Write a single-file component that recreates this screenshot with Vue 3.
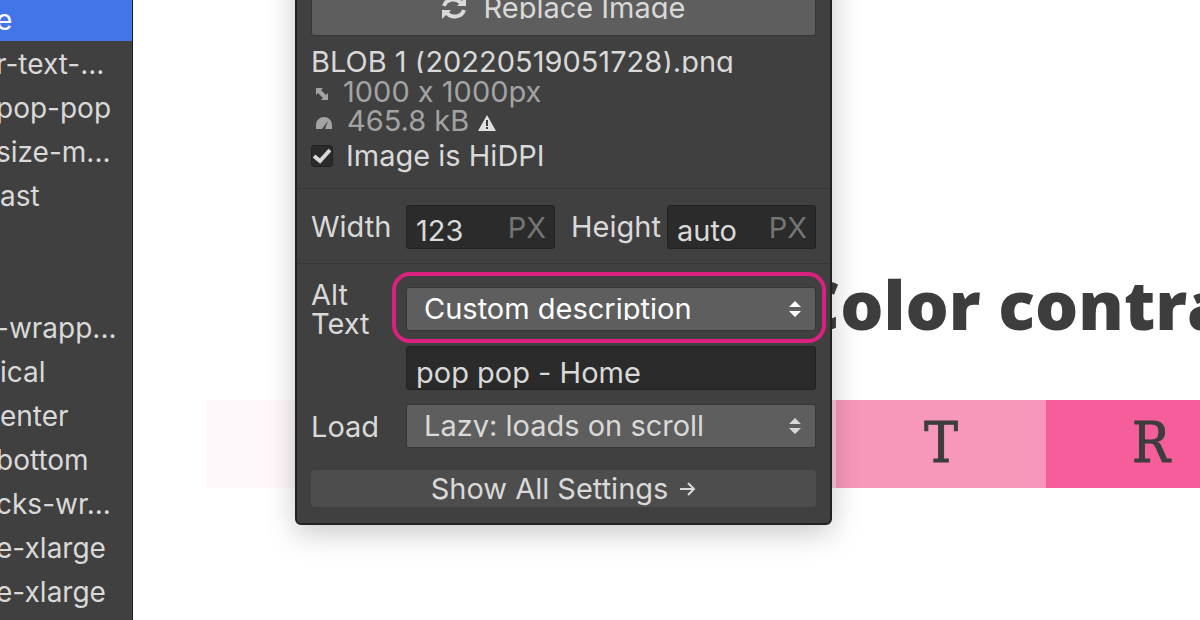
<script setup>
import { ref } from 'vue'

const layers = [
  { text: 'e', shift: 'active' },
  { text: 'r-text-...', shift: 'cut' },
  { text: 'pop-pop', shift: 'cut' },
  { text: 'size-m...', shift: 'cut' },
  { text: 'ast' },
  { text: '' },
  { text: '' },
  { text: '-wrapp...', shift: 'cut' },
  { text: 'ical' },
  { text: 'enter' },
  { text: 'bottom', shift: 'cut' },
  { text: 'cks-wr...', shift: 'cut' },
  { text: 'e-xlarge', shift: 'cut' },
  { text: 'e-xlarge', shift: 'cut' },
]

const swatches = [
  { letter: '', tone: 'tone-1' },
  { letter: '', tone: 'tone-2' },
  { letter: '', tone: 'tone-3' },
  { letter: 'T', tone: 'tone-4' },
  { letter: 'R', tone: 'tone-5' },
]

const hidpi = ref(true)
const width = ref('123')
const height = ref('auto')
const altMode = ref('custom')
const altText = ref('pop pop - Home')
const load = ref('lazy')
</script>

<template>
  <div class="designer">
    <nav class="sidebar" aria-label="Layers">
      <ul class="layers">
        <li v-for="(l, i) in layers" :key="i" :class="l.shift">{{ l.text }}</li>
      </ul>
    </nav>

    <main class="canvas">
      <h1 class="title">Color contrast</h1>
      <div class="swatches">
        <div v-for="s in swatches" :key="s.tone" class="swatch" :class="s.tone">{{ s.letter }}</div>
      </div>

      <section class="panel" aria-label="Image settings">
        <div class="block image">
          <button type="button" class="replace">
            <svg width="26" height="24" viewBox="0 0 26 24" fill="none" stroke="currentColor" stroke-width="4" aria-hidden="true">
              <path d="M3 10C5 3 15 1 20 7" />
              <path d="M23 14C21 21 11 23 6 17" />
              <path d="M25 1V10H16ZM1 23V14H10Z" fill="currentColor" stroke="none" />
            </svg>
            <span class="clip">Replace Image</span>
          </button>
          <div class="filename">BLOB 1 (20220519051728).png</div>
          <div class="meta">
            <svg class="dims" width="14" height="14" viewBox="0 0 14 14" aria-hidden="true">
              <path d="M1 1H8L6 3L11 8L13 6V13H6L8 11L3 6L1 8Z" fill="currentColor" />
            </svg>
            <span>1000 x 1000px</span>
          </div>
          <div class="meta">
            <svg class="gauge" width="18" height="14" viewBox="0 0 18 14" aria-hidden="true">
              <path d="M1 13V9A8 8 0 0 1 17 9V13H10L13 5L7 13Z" fill="currentColor" />
            </svg>
            <span>465.8 kB</span>
            <svg class="warn" width="18" height="16" viewBox="0 0 18 16" aria-hidden="true">
              <path d="M9 0L18 16H0Z" fill="currentColor" />
              <path d="M9 5V11M9 12V14" stroke="#404040" stroke-width="2" />
            </svg>
          </div>
          <label class="check">
            <input v-model="hidpi" type="checkbox" />
            <svg width="18" height="16" viewBox="0 0 18 16" fill="none" stroke="currentColor" stroke-width="4" aria-hidden="true">
              <path d="M1 8L7 13L17 2" />
            </svg>
            <span>Image is HiDPI</span>
          </label>
        </div>

        <div class="block size">
          <label for="w">Width</label>
          <div class="field"><input id="w" v-model="width" type="text" /><span class="unit">PX</span></div>
          <label for="h" class="second">Height</label>
          <div class="field"><input id="h" v-model="height" type="text" /><span class="unit">PX</span></div>
        </div>

        <div class="block settings">
          <label for="alt" class="two-line">Alt<br />Text</label>
          <div class="picker highlighted">
            <select id="alt" v-model="altMode">
              <option value="custom">Custom description</option>
              <option value="decorative">Decorative</option>
            </select>
            <svg width="12" height="16" viewBox="0 0 12 16" aria-hidden="true">
              <path d="M6 0L12 6H0ZM0 10H12L6 16Z" fill="currentColor" />
            </svg>
          </div>
          <div class="field wide"><input v-model="altText" type="text" aria-label="Alt text description" /></div>
          <label for="load">Load</label>
          <div class="picker">
            <select id="load" v-model="load">
              <option value="lazy">Lazy: loads on scroll</option>
              <option value="eager">Eager: loads with page</option>
            </select>
            <svg width="12" height="16" viewBox="0 0 12 16" aria-hidden="true">
              <path d="M6 0L12 6H0ZM0 10H12L6 16Z" fill="currentColor" />
            </svg>
          </div>
          <button type="button" class="all">
            Show All Settings
            <svg width="16" height="16" viewBox="0 0 16 16" fill="none" stroke="currentColor" stroke-width="2" aria-hidden="true">
              <path d="M0 8H14M8 2L14 8L8 14" />
            </svg>
          </button>
        </div>
      </section>
    </main>
  </div>
</template>

<style>
body {
  margin: 0;
  background: #fff;
}
</style>

<style scoped>
* {
  box-sizing: border-box;
}
.designer {
  display: flex;
  height: 100vh;
  overflow: hidden;
  font: 29px/30px Inter, sans-serif;
  font-feature-settings: "calt" 0;
  color: #d9d9d9;
}
input,
select,
button {
  font: inherit;
  font-feature-settings: "calt" 0;
  color: inherit;
}
.sidebar {
  flex: 0 0 133px;
  overflow: hidden;
  background: #404040;
  border-right: 1px solid #1c1c1c;
}
.layers {
  list-style: none;
  margin: -3px 0 0;
  padding: 0;
  font-size: 28px;
}
.layers li {
  height: 44px;
  line-height: 46px;
  white-space: nowrap;
}
.layers .cut {
  text-indent: -4px;
}
.layers .active {
  background: #4275e8;
  color: #fff;
  text-indent: -4px;
}
.canvas {
  position: relative;
  flex: 1;
  min-width: 0;
  overflow: hidden;
  background: #fff;
  color: #3d3d3d;
}
.title {
  margin: 264px 0 56px 663px;
  font: 800 68px/80px "Open Sans", sans-serif;
  white-space: nowrap;
}
.swatches {
  display: grid;
  grid-template-columns: repeat(5, minmax(210px, 1fr));
  margin-left: 73px;
}
.swatch {
  height: 88px;
  font: 56px/86px "DejaVu Serif Condensed", "DejaVu Serif", serif;
  -webkit-text-stroke: 1px #3d3d3d;
  text-align: center;
}
.tone-1 { background: #fff7f9; }
.tone-2 { background: #fde4ed; }
.tone-3 { background: #fbc8db; }
.tone-4 { background: #f797bb; }
.tone-5 { background: #f65e9b; }

.panel {
  position: absolute;
  top: -40px;
  left: 162px;
  width: 537px;
  background: #404040;
  border: 2px solid #222;
  border-radius: 6px;
  box-shadow: 0 8px 30px rgba(0, 0, 0, 0.22);
  color: #d9d9d9;
}
.block {
  padding: 16px 14px 14px;
}
.block + .block {
  border-top: 1px solid #363636;
}
.image {
  padding-bottom: 11px;
}
.replace {
  display: flex;
  align-items: center;
  justify-content: center;
  gap: 16px;
  width: 100%;
  height: 58px;
  padding: 2px 0 0;
  background: #5e5e5e;
  border: 1px solid #363636;
  border-radius: 3px;
}
.clip {
  height: 22px;
  line-height: 22px;
  overflow: hidden;
}
.filename {
  height: 22px;
  margin: 15px 0 4px;
  line-height: 22px;
  overflow: hidden;
  white-space: nowrap;
}
.meta {
  display: flex;
  align-items: center;
  line-height: 29px;
  color: #a3a3a3;
}
.dims {
  margin: 4px 14px 0 4px;
}
.gauge {
  margin: 4px 14px 0 4px;
}
.warn {
  margin: 4px 0 0 9px;
  color: #e0e0e0;
}
.check {
  position: relative;
  display: flex;
  align-items: center;
  gap: 13px;
  height: 42px;
}
.check input {
  appearance: none;
  width: 22px;
  height: 22px;
  margin: 0;
  background: #2b2b2b;
  border: 1px solid #222;
  border-radius: 3px;
}
.check svg {
  position: absolute;
  left: 2px;
  top: 13px;
}
.check input:not(:checked) + svg {
  display: none;
}
.size {
  display: grid;
  grid-template-columns: 95px 1fr auto 1fr;
  align-items: center;
}
.second {
  padding: 0 6px 0 16px;
}
.field {
  display: flex;
  min-width: 0;
  height: 44px;
  background: #2b2b2b;
  border: 1px solid #222;
  border-radius: 3px;
}
.field input {
  flex: 1;
  min-width: 0;
  padding: 8px 0 0 9px;
  background: none;
  border: 0;
  outline: 0;
}
.unit {
  padding-right: 8px;
  line-height: 44px;
  color: #757575;
}
.settings {
  display: grid;
  grid-template-columns: 95px 1fr;
  align-items: center;
  padding-bottom: 16px;
}
.settings label {
  line-height: 29px;
}
.settings .two-line {
  padding-bottom: 8px;
}
.picker {
  position: relative;
  height: 44px;
}
.picker select {
  appearance: none;
  width: 100%;
  height: 44px;
  margin: 0;
  padding: 10px 40px 10px 17px;
  line-height: 22px;
  background: #5e5e5e;
  border: 1px solid #363636;
  border-radius: 3px;
  outline: 0;
}
.picker svg {
  position: absolute;
  top: 14px;
  right: 15px;
  pointer-events: none;
}
.highlighted {
  margin: 7px 0 15px;
  color: #fff;
}
.highlighted::after {
  content: "";
  position: absolute;
  inset: -15px -10px -12px -14px;
  border: 4px solid #d9217f;
  border-radius: 18px;
  pointer-events: none;
}
.wide {
  grid-column: 2;
  margin-bottom: 14px;
}
.wide input {
  padding-top: 10px;
}
.all {
  grid-column: 1 / -1;
  display: flex;
  align-items: center;
  justify-content: center;
  gap: 12px;
  height: 37px;
  margin-top: 22px;
  padding: 0;
  background: #4d4d4d;
  border: 0;
  border-radius: 4px;
}
</style>
